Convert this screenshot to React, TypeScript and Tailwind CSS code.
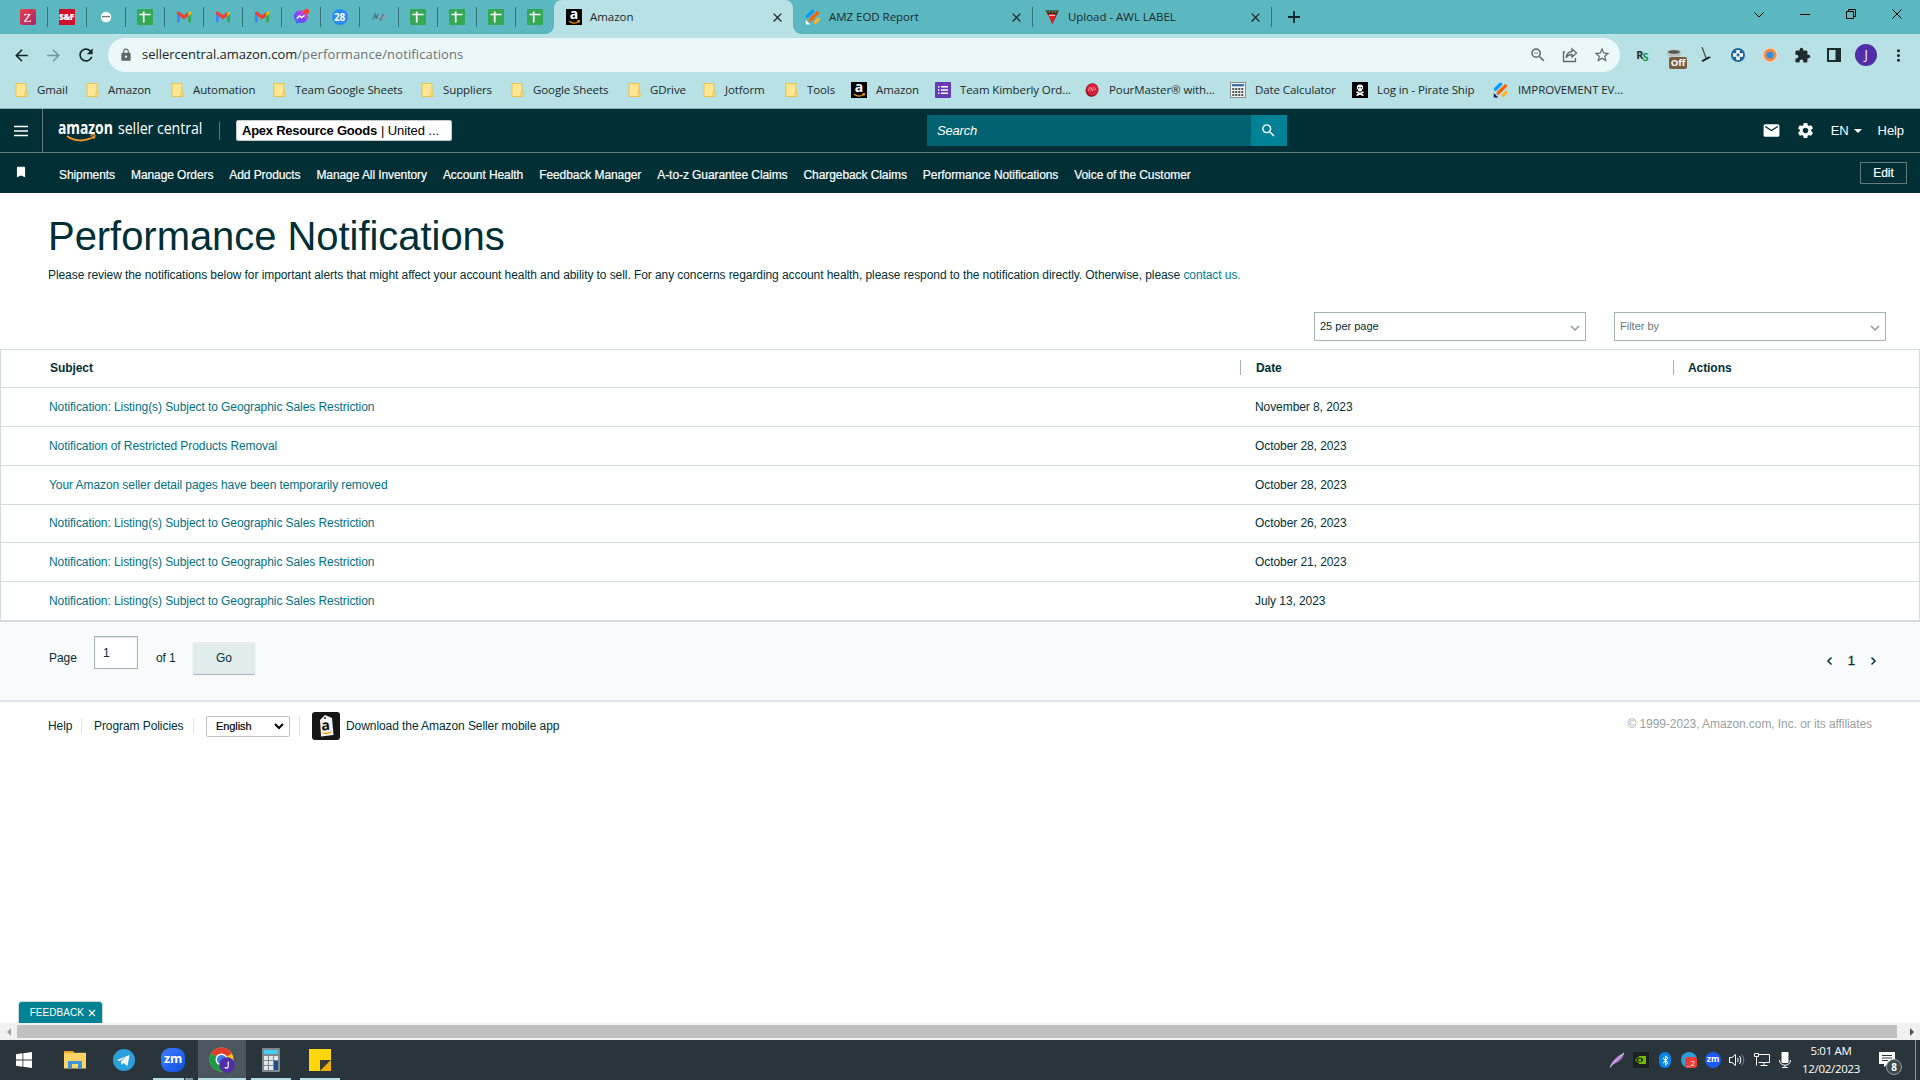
import type { ReactNode } from "react";
import {
  MdArrowBack, MdArrowForward, MdRefresh, MdLock, MdZoomOut, MdStarBorder, MdExtension,
  MdMoreVert, MdBookmark, MdMail, MdSettings, MdSearch, MdClose,
} from "react-icons/md";
import { FaBluetoothB } from "react-icons/fa";

/* ---------- small icons ---------- */

function Sheet() {
  return (
    <svg width="16" height="16" viewBox="0 0 16 16">
      <rect width="16" height="16" rx="1" fill="#34a853" />
      <path d="M2.5 5.5h11M6.7 2.5v11" stroke="#fff" strokeWidth="1.7" />
    </svg>
  );
}

function Gmail() {
  return (
    <svg width="16" height="16" viewBox="0 0 16 16">
      <path d="M1 4v9.2h2.8V6.6L1 4z" fill="#4285f4" />
      <path d="M15 4v9.2h-2.8V6.6L15 4z" fill="#34a853" />
      <path d="M12.2 3.4L15 2.6V5l-2.8 2.3z" fill="#fbbc04" />
      <path d="M1 5V3.6C1 2.4 2.4 2 3.4 2.8L8 6.3l4.2-3.2v4.2L8 10.4 1 5z" fill="#ea4335" />
    </svg>
  );
}

function Zfav() {
  return (
    <span className="flex size-4 items-center justify-center rounded-[2px] bg-linear-to-br from-[#e8403f] to-[#a5236e] font-['Liberation_Serif'] text-[13px] leading-none text-white">
      Z
    </span>
  );
}

function Sfav() {
  return (
    <span className="flex size-4 items-center justify-center bg-[#d0112b] font-['Open_Sans'] text-[8.5px] leading-none font-extrabold tracking-[-0.5px] text-white">
      S&amp;F
    </span>
  );
}

function Dash() {
  return (
    <svg width="16" height="16" viewBox="0 0 16 16">
      <circle cx="8" cy="8" r="5.2" fill="#fff" />
      <path d="M4 7.6h8" stroke="#777" strokeWidth="1.4" />
    </svg>
  );
}

function Messenger() {
  return (
    <svg width="16" height="16" viewBox="0 0 16 16" className="overflow-visible">
      <defs>
        <linearGradient id="msg" x1="0" y1="1" x2="1" y2="0">
          <stop offset="0" stopColor="#1f7bff" />
          <stop offset="0.5" stopColor="#8a3bff" />
          <stop offset="1" stopColor="#ff5c8a" />
        </linearGradient>
      </defs>
      <path d="M8 1.2c-4 0-7 2.8-7 6.5 0 2 .9 3.7 2.3 4.8V15l2.3-1.2c.8.2 1.600.3 2.400.3 4 0 7-2.800 7-6.400S12 1.200 8 1.200z" fill="url(#msg)" />
      <path d="M3.800 9.700l2.500-3 2.200 1.800 3-2" stroke="#fff" strokeWidth="1.500" fill="none" />
      <circle cx="13.500" cy="2.500" r="2.800" fill="#f44336" />
    </svg>
  );
}

function Twenty8() {
  return (
    <span className="flex size-4 items-center justify-center rounded-full bg-[#2a8bf2] font-['Open_Sans'] text-[10px] leading-none font-bold tracking-[-0.3px] text-white">
      28
    </span>
  );
}

function Nz() {
  return (
    <svg width="16" height="16" viewBox="0 0 16 16">
      <path d="M2 11l2-6 1 4 2-4-1 5M10 5.500h2.500L9 11h2" stroke="#4a7e93" strokeWidth="1.200" fill="none" />
      <path d="M7 11l4-6M12 10.500l2-4.500" stroke="#c08a93" strokeWidth="1.200" fill="none" />
    </svg>
  );
}

function AmazonFav() {
  return (
    <span className="relative flex size-4 items-start justify-center bg-black font-['Open_Sans'] text-[14px] leading-[10px] font-bold text-white">
      a
      <svg width="16" height="16" viewBox="0 0 16 16" className="absolute inset-0">
        <path d="M3 12.300c3 2.200 7 2.200 9.800.2M11.300 12l2-.2-.4 1.900" stroke="#f90" strokeWidth="1.300" fill="none" />
      </svg>
    </span>
  );
}

function Jotform({ dark = "#fff" }: { dark?: string }) {
  return (
    <svg width="16" height="16" viewBox="0 0 16 16" strokeLinecap="round">
      <path d="M2.500 7.200L7.500 2.200" stroke="#0099ff" strokeWidth="3.300" />
      <path d="M5.200 11L12.500 3.800" stroke="#ff6100" strokeWidth="3.300" />
      <path d="M10.200 13.300L13.200 10.300" stroke="#ffb629" strokeWidth="3.300" />
      <path d="M.8 11l4.500 4.500H1.500a.7.7 0 01-.7-.7z" fill={dark} />
    </svg>
  );
}

function Awl() {
  return (
    <svg width="16" height="16" viewBox="0 0 16 16">
      <path d="M1 1.500h14L8.200 15 5.600 8z" fill="#222" />
      <path d="M1.500 3h13" stroke="#d9b64a" strokeWidth="1" strokeDasharray="2 1" />
      <path d="M4 5h8.500L8.200 15z" fill="#f01822" />
      <path d="M5 6.300h6" stroke="#fff" strokeWidth=".8" />
    </svg>
  );
}

function Folder() {
  return (
    <svg width="13" height="16" viewBox="0 0 13 16">
      <path d="M1 1.500h10v8.700h1v4.300H1z" fill="#ffe694" stroke="#ecc146" strokeWidth="1" />
      <path d="M10 14.500v-4.300h1.500" stroke="#ecc146" fill="none" />
    </svg>
  );
}

function FormsIcon() {
  return (
    <svg width="16" height="16" viewBox="0 0 16 16">
      <rect width="16" height="16" rx="1" fill="#673ab7" />
      <path d="M3 4.800h1.500M3 8h1.500M3 11.200h1.500M6 4.800h7M6 8h7M6 11.200h7" stroke="#fff" strokeWidth="1.500" />
    </svg>
  );
}

function Pour() {
  return (
    <svg width="16" height="16" viewBox="0 0 16 16">
      <ellipse cx="8" cy="8" rx="6.300" ry="6.800" fill="#8d1022" transform="rotate(25 8 8)" />
      <ellipse cx="8.300" cy="7.300" rx="5.800" ry="6" fill="#d81f3c" transform="rotate(25 8 8)" />
      <path d="M4.500 9l1-3.500 2 .5-.5 3M8.500 9l1-4M10.500 8.500l1.500-3" stroke="#f59aa8" strokeWidth=".9" fill="none" />
    </svg>
  );
}

function Calc() {
  return (
    <svg width="16" height="16" viewBox="0 0 16 16">
      <rect x=".5" y=".5" width="15" height="15" fill="#f2f2f2" stroke="#8b8b8b" />
      <path d="M2 3.200h12" stroke="#2d6ca8" strokeWidth="2.200" />
      <path d="M2.300 7h12M2.300 10h12M2.300 13h12" stroke="#1d1d1d" strokeWidth="1.700" strokeDasharray="2 1" />
    </svg>
  );
}

function Pirate() {
  return (
    <svg width="16" height="16" viewBox="0 0 16 16">
      <rect width="16" height="16" fill="#000" />
      <path d="M4.500 10l7 3.500M11.500 10l-7 3.500" stroke="#fff" strokeWidth="1.500" />
      <path d="M8 2.500c-2 0-3.200 1.300-3.200 3 0 1.200.6 1.900 1.400 2.300v1.700h3.600V7.800c.8-.4 1.400-1.100 1.400-2.300 0-1.700-1.200-3-3.200-3z" fill="#fff" />
      <circle cx="6.700" cy="5.800" r=".8" />
      <circle cx="9.300" cy="5.800" r=".8" />
    </svg>
  );
}

/* ---------- browser chrome ---------- */

const pinned: ReactNode[] = [
  <Zfav />, <Sfav />, <Dash />, <Sheet />, <Gmail />, <Gmail />, <Gmail />, <Messenger />,
  <Twenty8 />, <Nz />, <Sheet />, <Sheet />, <Sheet />, <Sheet />,
];

function Tab({ icon, title, active, sep }: { icon: ReactNode; title: string; active?: boolean; sep?: boolean }) {
  return (
    <div
      className={
        "relative flex w-[239px] items-center pr-2 pl-3 " + (active ? "rounded-t-lg bg-[#b7e1e4]" : "")
      }
    >
      {active && (
        <>
          <span className="absolute bottom-0 -left-2 size-2 bg-[radial-gradient(circle_at_0_0,transparent_7.5px,#b7e1e4_8px)]" />
          <span className="absolute -right-2 bottom-0 size-2 bg-[radial-gradient(circle_at_100%_0,transparent_7.5px,#b7e1e4_8px)]" />
        </>
      )}
      {icon}
      <span className="ml-2 grow text-[11.5px] text-[#1f2a2c]">{title}</span>
      <MdClose className="size-[15px] text-[#20292b]" />
      {sep && <span className="absolute top-[7px] -right-px h-5 w-px bg-[#35727a]" />}
    </div>
  );
}

function TabStrip() {
  return (
    <div className="flex h-[34px] bg-[#5bb8c1] pl-2">
      {pinned.map((icon, i) => (
        <div key={i} className="relative flex w-[39px] items-center justify-center">
          {icon}
          {i < 13 && <span className="absolute top-[7px] -right-px h-5 w-px bg-[#35727a]" />}
        </div>
      ))}
      <Tab icon={<AmazonFav />} title="Amazon" active />
      <Tab icon={<Jotform />} title="AMZ EOD Report" sep />
      <Tab icon={<Awl />} title="Upload - AWL LABEL" sep />
      <div className="flex w-[46px] items-center justify-center">
        <svg width="12" height="12" stroke="#15262a" strokeWidth="1.800">
          <path d="M6 0v12M0 6h12" />
        </svg>
      </div>
      <div className="ml-auto flex h-7 items-center">
        {["M.5 3.500L5 8l4.500-4.500", "M0 5.500h10", "M.5 2.500h7v7h-7zM2.500 2.500v-2h7v7h-2", "M.5.5l9 9M9.500.5l-9 9"].map((d) => (
          <div key={d} className="flex w-[46px] justify-center">
            <svg width="10" height="10" viewBox="0 0 10 10" fill="none" stroke="#000">
              <path d={d} />
            </svg>
          </div>
        ))}
      </div>
    </div>
  );
}

function Slot({ children }: { children: ReactNode }) {
  return <div className="relative flex w-8 items-center justify-center">{children}</div>;
}

function Toolbar() {
  return (
    <div className="flex h-[38px] bg-[#b7e1e4] pt-1 pl-[5px]">
      <div className="flex w-[103px] items-center text-[#16262a]">
        <Slot><MdArrowBack className="size-[19px]" /></Slot>
        <Slot><MdArrowForward className="size-[19px] text-[#71979b]" /></Slot>
        <Slot><MdRefresh className="ml-px size-[20px]" /></Slot>
      </div>
      <div className="flex w-[1512px] items-center rounded-full bg-[#ebf8f9] pr-[2px] pl-[11px] text-[#5b6668]">
        <MdLock className="size-[14px]" />
        <span className="ml-[9px] text-[13px] tracking-[-0.03px] text-[#1b2426]">sellercentral.amazon.com</span>
        <span className="text-[13px] tracking-[0.12px] text-[#6a7173]">/performance/notifications</span>
        <div className="ml-auto flex h-full">
          <Slot><MdZoomOut className="size-[18px]" /></Slot>
          <Slot>
            <svg width="16" height="16" viewBox="0 0 16 16" fill="none" stroke="currentColor" strokeWidth="1.300">
              <path d="M3 5H1.500v9.500h12V11" />
              <path d="M10 2l4.500 4L10 10V7.500C7 7.500 5.300 8.500 4 11c.3-3.600 2.200-6 6-6.500z" />
            </svg>
          </Slot>
          <Slot><MdStarBorder className="size-[18px]" /></Slot>
        </div>
      </div>
      <div className="ml-[6px] flex h-[34px] text-[#202b2d]">
        <Slot>
          <span className="text-[11px] font-bold tracking-[-0.8px]">R<span className="relative top-[2px] text-[#129a4a]">S</span></span>
        </Slot>
        <Slot>
          <svg width="16" height="16" viewBox="0 0 16 16">
            <path d="M1.500 5v4.500h13V5" fill="#b9bfc0" />
            <ellipse cx="8" cy="5" rx="6.500" ry="2.300" fill="#555" stroke="#c9cccc" />
          </svg>
          <span className="absolute top-[19px] left-[11px] flex h-3 w-[18px] items-center justify-center rounded-[2px] bg-[#795b3f] text-[9.500px] leading-none font-bold tracking-[-0.2px] text-white">Off</span>
        </Slot>
        <Slot>
          <svg width="16" height="16" viewBox="0 0 16 16">
            <path d="M4 0l4 11" stroke="#444" strokeWidth="1.200" />
            <path d="M3.500 13.500l7-4 2.500.5-1 1-7.500 4z" fill="#1d1d1d" />
          </svg>
        </Slot>
        <Slot>
          <svg width="16" height="16" viewBox="0 0 16 16">
            <circle cx="8" cy="8" r="7" fill="#1f6796" />
            <path d="M8 3v10M3 8h10" stroke="#fff" strokeWidth="3.400" strokeDasharray="3.800 2.400" />
            <circle cx="8" cy="8" r="1.400" fill="#1f6796" />
          </svg>
        </Slot>
        <Slot>
          <svg width="16" height="16" viewBox="0 0 16 16">
            <circle cx="8" cy="8" r="7.500" fill="#f9d9c0" />
            <circle cx="8" cy="8" r="5" fill="#2c92e0" stroke="#f28a4c" strokeWidth="2.800" />
          </svg>
        </Slot>
        <Slot><MdExtension className="size-[17px]" /></Slot>
        <Slot>
          <svg width="14" height="14" viewBox="0 0 14 14">
            <path d="M1 1h12v12H1z" fill="none" stroke="#202b2d" strokeWidth="2" />
            <path d="M8.500 1H13v12H8.500z" fill="#202b2d" />
          </svg>
        </Slot>
        <Slot>
          <span className="flex size-[22px] items-center justify-center rounded-full bg-[#512da8] text-[12px] text-white">J</span>
        </Slot>
        <Slot><MdMoreVert className="size-[19px]" /></Slot>
      </div>
    </div>
  );
}

function Mark({ icon, label, width }: { icon: ReactNode; label: string; width: string }) {
  return (
    <div className={"flex shrink-0 items-center " + width}>
      <span className="flex shrink-0">{icon}</span>
      <span className="ml-[9px] whitespace-nowrap">{label}</span>
    </div>
  );
}

function Bookmarks() {
  return (
    <div className="flex h-[37px] items-center border-b border-[#8db0b3] bg-[#b7e1e4] pl-[15px] text-[11.5px] tracking-[-0.1px] text-[#1d2b2e]">
      <Mark icon={<Folder />} label="Gmail" width="w-[71px]" />
      <Mark icon={<Folder />} label="Amazon" width="w-[85px]" />
      <Mark icon={<Folder />} label="Automation" width="w-[102px]" />
      <Mark icon={<Folder />} label="Team Google Sheets" width="w-[148px]" />
      <Mark icon={<Folder />} label="Suppliers" width="w-[90px]" />
      <Mark icon={<Folder />} label="Google Sheets" width="w-[117px]" />
      <Mark icon={<Folder />} label="GDrive" width="w-[75px]" />
      <Mark icon={<Folder />} label="Jotform" width="w-[82px]" />
      <Mark icon={<Folder />} label="Tools" width="w-[66px]" />
      <Mark icon={<AmazonFav />} label="Amazon" width="w-[84px]" />
      <Mark icon={<FormsIcon />} label="Team Kimberly Ord..." width="w-[149px]" />
      <Mark icon={<Pour />} label="PourMaster® with..." width="w-[146px]" />
      <Mark icon={<Calc />} label="Date Calculator" width="w-[122px]" />
      <Mark icon={<Pirate />} label="Log in - Pirate Ship" width="w-[141px]" />
      <Mark icon={<Jotform dark="#0a1551" />} label="IMPROVEMENT EV..." width="w-[140px]" />
    </div>
  );
}

/* ---------- seller central ---------- */

const quickLinks = [
  "Shipments", "Manage Orders", "Add Products", "Manage All Inventory", "Account Health",
  "Feedback Manager", "A-to-z Guarantee Claims", "Chargeback Claims", "Performance Notifications",
  "Voice of the Customer",
];

function SellerHeader() {
  return (
    <header className="bg-[#002f36] text-white">
      <div className="flex h-[44px] items-center border-b border-[#66797c]">
        <div className="flex h-full w-[43px] items-center border-r border-[#66797c] pl-[14px]">
          <svg width="14" height="12" stroke="#fff" strokeWidth="1.500">
            <path d="M0 1.500h14M0 6h14M0 10.500h14" />
          </svg>
        </div>
        <div className="relative ml-[15px] flex h-full w-[161px] items-start pt-[7px] font-['Open_Sans'] text-[17px] leading-[24px]">
          <span className="w-[60px] origin-left scale-x-[0.82] font-bold">amazon</span>
          <span className="origin-left scale-x-[0.835] whitespace-nowrap">seller central</span>
          <svg width="32" height="9" viewBox="0 0 32 9" className="absolute top-[25px] left-[8px]" fill="none" stroke="#f59331">
            <path d="M1 2c7 5.500 18 6 27 .5" strokeWidth="2" />
            <path d="M24.500 1.300c2-.6 3.700-.7 4.200-.3s.1 2.200-1 4" strokeWidth="1.300" />
          </svg>
        </div>
        <div className="h-[18px] w-px bg-[#66797c]" />
        <div className="ml-[16px] flex h-[21px] w-[216px] items-center rounded-[2px] border border-[#c3cdce] bg-white pl-[5px] text-[13px] text-black">
          <b className="tracking-[-0.24px]">Apex Resource Goods</b>
          <span className="ml-1">| United ...</span>
        </div>
        <div className="ml-[475px] flex h-[31px] w-[360px]">
          <div className="flex w-[324px] items-center bg-[#006170] pl-[10px] text-[13px] tracking-[-0.2px] italic">Search</div>
          <div className="flex grow items-center justify-center bg-[#008296] pr-px">
            <MdSearch className="size-[17px]" />
          </div>
        </div>
        <div className="ml-auto flex items-center text-[13px]">
          <MdMail className="size-[19px]" />
          <MdSettings className="ml-[15px] size-[19px]" />
          <span className="ml-[16px]">EN</span>
          <span className="ml-[5px] border-x-4 border-t-4 border-x-transparent border-t-white" />
          <span className="mr-[16px] ml-[16px]">Help</span>
        </div>
      </div>
      <div className="flex h-[40px] items-center">
        <div className="w-[59px] pb-[2px] pl-[14px]">
          <MdBookmark className="size-[14px]" />
        </div>
        <nav className="flex gap-4 pt-[3px] text-[12px] tracking-[-0.08px]">
          {quickLinks.map((l) => (
            <a key={l} className="whitespace-nowrap [-webkit-text-stroke:0.2px_white]">{l}</a>
          ))}
        </nav>
        <div className="mr-[13px] mb-px ml-auto flex h-[22px] w-[47px] items-center justify-center border border-[#66797c] text-[12px] [-webkit-text-stroke:0.2px_white]">
          Edit
        </div>
      </div>
    </header>
  );
}

function SelectBox({ label, muted }: { label: string; muted?: boolean }) {
  return (
    <div className="flex h-[29px] w-[272px] items-center justify-between border border-[#a2b4b6] pr-[5px] pl-[5px] text-[11px]">
      <span className={"-mt-px tracking-[0px] " + (muted ? "text-[#66797c]" : "text-[#002f36]")}>{label}</span>
      <svg width="10" height="10" viewBox="0 0 10 10" fill="none" stroke="#8b9b9d" strokeWidth="1.500" className="mt-[2px]">
        <path d="M1 3l4 4 4-4" />
      </svg>
    </div>
  );
}

const geo = "Notification: Listing(s) Subject to Geographic Sales Restriction";
const rows: { subject: string; date: string; short?: boolean }[] = [
  { subject: geo, date: "November 8, 2023" },
  { subject: "Notification of Restricted Products Removal", date: "October 28, 2023" },
  { subject: "Your Amazon seller detail pages have been temporarily removed", date: "October 28, 2023" },
  { subject: geo, date: "October 26, 2023", short: true },
  { subject: geo, date: "October 21, 2023" },
  { subject: geo, date: "July 13, 2023" },
];

function NotificationsTable() {
  return (
    <div className="border border-b-0 border-[#d5dbdb]">
      <div className="flex h-[38px] items-center border-b border-[#d5dbdb] pb-[2px] font-bold">
        <span className="w-[1239px] pl-[49px]">Subject</span>
        <span className="flex h-[15px] w-[433px] items-center border-l border-[#a2b4b6] pl-[15px]">Date</span>
        <span className="flex h-[15px] items-center border-l border-[#a2b4b6] pl-[14px]">Actions</span>
      </div>
      {rows.map((r, i) => (
        <div key={i} className={"flex items-center border-b border-[#d5dbdb] " + (r.short ? "h-[38px] pb-px" : "h-[39px]")}>
          <a className="w-[1254px] pl-[48px] text-[#007185]">{r.subject}</a>
          <span>{r.date}</span>
        </div>
      ))}
    </div>
  );
}

function Pager() {
  return (
    <div className="flex h-[81px] items-start border-t border-b-2 border-t-[#d5dbdb] border-b-[#e0e3e8] bg-[#f9fafc] pl-[49px]">
      <span className="mt-[27px] w-[45px]">Page</span>
      <div className="mt-[14px] flex h-[33px] w-[44px] items-center border border-[#a2b4b6] bg-white pl-[8px] shadow-[inset_0_1px_2px_#dde3e4]">1</div>
      <span className="mt-[27px] ml-[18px] w-[37px]">of 1</span>
      <div className="mt-[20px] flex h-[32px] w-[62px] items-center justify-center rounded-[2px] bg-[#e3eced] shadow-[0_1px_1px_#a9b3b5]">Go</div>
      <div className="mt-[31px] mr-[43px] ml-auto flex items-center text-[13px]">
        <svg width="7" height="10" viewBox="0 0 7 10" fill="none" stroke="#002f36" strokeWidth="1.500">
          <path d="M5.500 1.500L2 5l3.500 3.500" />
        </svg>
        <span className="mx-[15px] leading-4 [-webkit-text-stroke:0.300px_#002f36]">1</span>
        <svg width="7" height="10" viewBox="0 0 7 10" fill="none" stroke="#002f36" strokeWidth="1.500">
          <path d="M1.500 1.500L5 5 1.500 8.500" />
        </svg>
      </div>
    </div>
  );
}

function PageFooter() {
  return (
    <footer className="flex h-[48px] items-center">
      <span className="w-[33px]">Help</span>
      <span className="flex h-4 w-[112px] items-center border-l border-[#dfe2e3] pl-[12px] whitespace-nowrap">Program Policies</span>
      <span className="flex h-4 w-[13px] border-l border-[#dfe2e3]" />
      <div className="flex h-[21px] w-[84px] items-center justify-between rounded-[2px] border border-[#bcc4c5] bg-white pr-[5px] pl-[9px] text-[11px] text-black [-webkit-text-stroke:0.200px_black]">
        English
        <svg width="10" height="7" viewBox="0 0 10 7" fill="none" stroke="#000" strokeWidth="2">
          <path d="M1 1l4 4 4-4" />
        </svg>
      </div>
      <span className="ml-[9px] h-5 w-[13px] border-l border-[#dfe2e3]" />
      <svg width="28" height="28" viewBox="0 0 28 28">
        <rect width="28" height="28" rx="3" fill="#161616" />
        <path d="M8 8l5-5 7 3 1.500 17-12.500 1.500z" fill="#f4f4f4" />
        <circle cx="13" cy="6" r="1" fill="#222" />
        <text x="9.500" y="18" fontFamily="Open Sans" fontWeight="700" fontSize="14" fill="#111" transform="rotate(-5 14 15)">a</text>
        <path d="M10 20.500c3 1.500 6 1.300 9-.8" stroke="#f90" strokeWidth="1.300" fill="none" />
      </svg>
      <span className="ml-[6px]">Download the Amazon Seller mobile app</span>
      <span className="mr-[48px] mb-[5px] ml-auto text-[#999fa0]">© 1999-2023, Amazon.com, Inc. or its affiliates</span>
    </footer>
  );
}

/* ---------- taskbar ---------- */

function TaskItem({ children, active, open }: { children: ReactNode; active?: boolean; open?: boolean }) {
  return (
    <div className={"relative flex h-10 w-12 shrink-0 items-center justify-center " + (active ? "bg-[#4a575e]" : "")}>
      {children}
      {active && <span className="absolute inset-x-0 bottom-0 h-[2px] bg-[#b7dde4]" />}
      {open && <span className="absolute inset-x-1 bottom-0 h-[2px] bg-[#b7dde4]" />}
    </div>
  );
}

function Taskbar() {
  return (
    <div className="flex h-10 items-center bg-[#2a353b] text-white">
      <div className="flex gap-px">
        <TaskItem>
          <svg width="16" height="16" viewBox="0 0 16 16" fill="#fff">
            <path d="M0 2.200l6.500-.9v6.300H0zM7.300 1.200L16 0v7.600H7.300zM0 8.400h6.500v6.300L0 13.800zM7.300 8.400H16V16l-8.700-1.200z" />
          </svg>
        </TaskItem>
        <div className="w-px" />
        <TaskItem>
          <svg width="22" height="20" viewBox="0 0 22 20">
            <path d="M0 1h9l1.500 2H0z" fill="#e8a317" />
            <rect y="2.800" width="22" height="15.700" fill="#ffd365" />
            <path d="M4 18.500V11h14v7.500h-4V14H8v4.500z" fill="#3d95dc" />
          </svg>
        </TaskItem>
        <TaskItem>
          <svg width="22" height="22" viewBox="0 0 22 22">
            <circle cx="11" cy="11" r="11" fill="#2a9fd9" />
            <path d="M4 11l12.500-5-2 11-4-3-2 2-.4-3.500 5-4.700-6.500 4.200z" fill="#fff" />
          </svg>
        </TaskItem>
        <TaskItem>
          <span className="flex size-6 items-center justify-center rounded-[9px] bg-linear-to-br from-[#3f7dff] to-[#0b4fe0] pb-[2px] text-[12.500px] leading-none font-bold">zm</span>
          <span className="absolute bottom-0 left-1 h-[2px] w-[31px] bg-[#b7dde4]" />
          <span className="absolute right-1 bottom-0 h-[2px] w-2 bg-[#8298a0]" />
        </TaskItem>
        <TaskItem active>
          <svg width="26" height="26" viewBox="0 0 26 26">
            <circle cx="12.500" cy="12.500" r="12" fill="#fbc116" />
            <path d="M12.500 12.500L2.100 6.500a12 12 0 0110.400-6 12 12 0 0110.400 6z" fill="#e33b2e" />
            <path d="M12.500 12.500L2.100 6.500a12 12 0 0010.400 18l4-7z" fill="#1e9c4b" />
            <circle cx="12.500" cy="12.500" r="6" fill="#fff" />
            <circle cx="12.500" cy="12.500" r="4.600" fill="#3b7ded" />
            <circle cx="18" cy="18" r="7.800" fill="#512da8" />
            <path d="M19.200 14.500v5.200a1.700 1.700 0 01-3.300.3" stroke="#fff" strokeWidth="1.200" fill="none" />
          </svg>
        </TaskItem>
        <TaskItem open>
          <svg width="18" height="24" viewBox="0 0 18 24">
            <rect width="18" height="24" rx="1" fill="#7d878e" />
            <rect x="2" y="2" width="14" height="4" fill="#47cdf5" />
            <path d="M2 10h14M2 15h9M2 20h9" stroke="#e4e8ea" strokeWidth="4" strokeDasharray="4 1" />
            <rect x="12" y="13" width="4" height="9" fill="#1c4f8c" />
          </svg>
        </TaskItem>
        <TaskItem open>
          <svg width="22" height="22" viewBox="0 0 22 22">
            <path d="M0 0h22v11L11 22H0z" fill="#ffd60a" />
            <path d="M11 22V11h11z" fill="#3a3a3a" />
            <path d="M11 22L22 11v11z" fill="#eeb000" />
          </svg>
        </TaskItem>
      </div>
      <div className="ml-auto flex h-full items-center">
        <div className="flex items-center gap-2">
          <svg width="16" height="16" viewBox="0 0 16 16">
            <path d="M1 15.500C2 9 8 4 15 1c0 5-5 9-12 12z" fill="#b076d6" />
            <path d="M1 15.500C5 10 10 5 15 1" stroke="#ead5f5" fill="none" />
          </svg>
          <svg width="16" height="16" viewBox="0 0 16 16">
            <rect width="16" height="16" fill="#1c2021" />
            <path d="M6 4h7v8H6" fill="#76b900" />
            <path d="M2.500 8c2.500-4 6-4 8.500 0-2.500 3.500-6 3.500-8.500 0z" fill="#1c2021" stroke="#76b900" />
            <circle cx="6.800" cy="8" r="1.600" fill="#76b900" />
          </svg>
          <span className="flex w-4 justify-center">
            <span className="flex h-4 w-3 items-center justify-center rounded-[6px] bg-[#0a84e8]">
              <FaBluetoothB className="size-[11px]" />
            </span>
          </span>
          <span className="relative size-4 rounded-full bg-[#2a9fd9]">
            <span className="absolute top-[5px] left-1 flex h-[11px] w-3 items-end justify-center rounded-[3px] bg-[#ee3b35] text-[8px] leading-[10px]">_2</span>
          </span>
          <span className="flex size-4 items-center justify-center rounded-full bg-[#1a5cf0] pb-px text-[8.500px] leading-none font-bold">zm</span>
          <svg width="16" height="16" viewBox="0 0 16 16" fill="none" stroke="#fff">
            <path d="M.5 5.500h2.500l3.500-3v11L3 10.500H.5zM8.500 6c.8 1.300.8 2.700 0 4M10.500 4c1.700 2.700 1.700 5.300 0 8" />
            <path d="M12.800 2.500c2.600 3.700 2.600 7.300 0 11" stroke="#7e8b90" />
          </svg>
          <svg width="16" height="16" viewBox="0 0 16 16" fill="none" stroke="#fff" className="ml-px">
            <path d="M4.500 2.500h11v8h-11M10 10.500v3M6.500 13.500h7M.5 1.500h4v3h-4zM2.500 4.500v9" />
          </svg>
          <svg width="16" height="18" viewBox="0 0 16 18" className="-ml-px">
            <rect x="4.500" y="1" width="7" height="11" rx="1" fill="#fff" />
            <path d="M2.500 9c0 7 11 7 11 0M8 14v2.500M5 16.500h6" stroke="#fff" fill="none" />
          </svg>
        </div>
        <div className="ml-[4px] w-[68px] text-center text-[11.500px] leading-[18px] tracking-[-0.3px]">
          5:01 AM
          <br />
          12/02/2023
        </div>
        <div className="relative ml-[10px] h-full w-[40px]">
          <svg width="16" height="15" viewBox="0 0 16 15" className="mt-3 ml-1">
            <path d="M0 0h16v12H9l-4 3v-3H0z" fill="#fff" />
            <path d="M3 3.500h10M3 6h10M3 8.500h6" stroke="#2a353b" />
          </svg>
          <span className="absolute top-[19px] left-[11px] flex size-4 items-center justify-center rounded-full border border-[#93a0a5] bg-[#3c484e] text-[10px] leading-none font-bold">8</span>
        </div>
        <span className="h-full w-[5px] border-l border-[#8d979b]" />
      </div>
    </div>
  );
}

export default function App() {
  return (
    <div className="flex h-[1080px] w-[1920px] flex-col overflow-hidden bg-white font-['Liberation_Sans',sans-serif] text-[12px] tracking-[-0.075px] text-[#002f36]">
      <div className="font-['Open_Sans',sans-serif] tracking-[-0.03px]">
        <TabStrip />
        <Toolbar />
        <Bookmarks />
      </div>
      <SellerHeader />
      <main className="flex grow flex-col">
        <div className="h-[119px] pl-[48px]">
          <h1 className="pt-[20px] text-[40px] leading-[46px] tracking-[-0.05px]">Performance Notifications</h1>
          <p className="mt-[8px] leading-4">
            Please review the notifications below for important alerts that might affect your account health and ability to sell. For any concerns
            regarding account health, please respond to the notification directly. Otherwise, please <a className="text-[#007c91]">contact us.</a>
          </p>
        </div>
        <div className="flex h-[37px] justify-end gap-[28px] pr-[34px]">
          <SelectBox label="25 per page" />
          <SelectBox label="Filter by" muted />
        </div>
        <NotificationsTable />
        <Pager />
        <div className="pl-[48px]">
          <PageFooter />
        </div>
        <div className="mt-auto ml-[18px] flex h-[22px] w-[85px] items-center justify-end gap-1 rounded-t-[4px] border border-b-0 border-[#cfd8d9] bg-[#008296] pr-[6px] text-[10px] tracking-[0.05px] text-white">
          FEEDBACK
          <svg width="8" height="8" viewBox="0 0 8 8" stroke="#fff" strokeWidth="1.200">
            <path d="M1 1l6 6M7 1L1 7" />
          </svg>
        </div>
      </main>
      <div className="flex h-[17px] shrink-0 items-center bg-[#f1f1f1]">
        <div className="flex w-[17px] justify-center">
          <span className="border-y-4 border-r-4 border-y-transparent border-r-[#a0a0a0]" />
        </div>
        <div className="h-[13px] w-[1880px] bg-[#c1c1c1]" />
        <div className="flex grow justify-center pl-[6px]">
          <span className="border-y-4 border-l-4 border-y-transparent border-l-[#505050]" />
        </div>
      </div>
      <div className="shrink-0 font-['Open_Sans',sans-serif]">
        <Taskbar />
      </div>
    </div>
  );
}
